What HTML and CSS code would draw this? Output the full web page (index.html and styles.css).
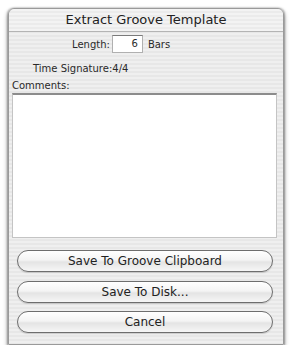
FILE: index.html
```html
<!DOCTYPE html>
<html>
<head>
<meta charset="utf-8">
<link rel="stylesheet" href="styles.css">
</head>
<body>
<div class="window">
  <div class="titlebar">Extract Groove Template</div>
  <div class="row-length">
    <span class="lbl">Length:</span>
    <span class="field">6</span>
    <span class="lbl">Bars</span>
  </div>
  <div class="row-time">Time Signature:4/4</div>
  <div class="row-comments">Comments:</div>
  <div class="comments-box"></div>
  <div class="buttons">
    <div class="btn btn1">Save To Groove Clipboard</div>
    <div class="btn btn2">Save To Disk...</div>
    <div class="btn btn3">Cancel</div>
  </div>
</div>
</body>
</html>
```
FILE: styles.css
```css
html, body {
  margin: 0;
  padding: 0;
  background: #fff;
}
body {
  font-family: "DejaVu Sans", "Liberation Sans", sans-serif;
  color: #2a2a2a;
}
.window {
  margin: 8px 0 0 8px;
  width: 274px;
  height: 335px;
  border: 1px solid #9a9a9a;
  border-radius: 6px 6px 0 0;
  box-shadow: 0 3px 5px rgba(0,0,0,0.45), -1px 0 2px rgba(0,0,0,0.25), 1px 0 2px rgba(0,0,0,0.25);
  background: repeating-linear-gradient(to bottom, #efefef 0, #efefef 2px, #e7e7e7 2px, #e7e7e7 4px);
  display: flex;
  flex-direction: column;
}
.titlebar {
  height: 22px;
  line-height: 22px;
  text-align: center;
  font-size: 13px;
  color: #222;
  border-bottom: 1px solid #b4b4b4;
  border-radius: 6px 6px 0 0;
  background: repeating-linear-gradient(to bottom, #f3f3f3 0, #f3f3f3 2px, #ebebeb 2px, #ebebeb 4px);
}
.row-length {
  display: flex;
  align-items: center;
  padding-left: 63px;
  margin-top: 3px;
  height: 18px;
  font-size: 10px;
  gap: 2px;
}
.field {
  width: 25px;
  height: 16px;
  line-height: 16px;
  background: #fff;
  border: 1px solid #b0b0b0;
  border-top-color: #7a7a7a;
  text-align: right;
  padding-right: 4px;
  margin-right: 3px;
}
.row-time {
  font-size: 10px;
  padding-left: 24px;
  margin-top: 9px;
  height: 14px;
  line-height: 14px;
}
.row-comments {
  font-size: 10px;
  padding-left: 3px;
  margin-top: 3px;
  height: 14px;
  line-height: 14px;
}
.comments-box {
  margin: 0 0 0 3px;
  width: 263px;
  height: 142px;
  background: #fff;
  border: 1px solid #c4c4c4;
  border-top: 2px solid #8c8c8c;
}
.buttons {
  display: flex;
  flex-direction: column;
  padding-left: 8px;
  margin-top: 12px;
}
.btn {
  width: 254px;
  height: 20px;
  line-height: 20px;
  text-align: center;
  font-size: 12px;
  color: #222;
  border: 1px solid #6e6e6e;
  border-radius: 11px;
  background: linear-gradient(to bottom, #ffffff 0%, #f4f4f4 45%, #e4e4e4 55%, #f6f6f6 100%);
  box-shadow: 0 1px 1px rgba(0,0,0,0.15);
}
.btn2 { margin-top: 9px; }
.btn3 { margin-top: 8px; }
```
